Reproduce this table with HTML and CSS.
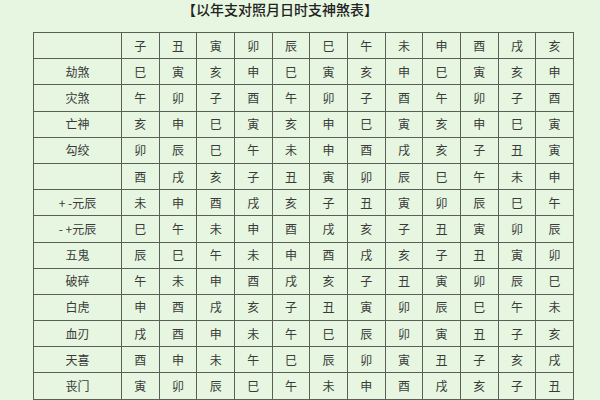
FILE: index.html
```html
<!DOCTYPE html>
<html lang="zh">
<head>
<meta charset="utf-8">
<link rel="stylesheet" href="styles.css">
</head>
<body>
<div class="page">
  <div class="title">【以年支对照月日时支神煞表】</div>
  <table class="grid">
    <colgroup><col class="c-name"><col span="12" class="c-val"></colgroup>
    <tbody>
      <tr><td></td><td>子</td><td>丑</td><td>寅</td><td>卯</td><td>辰</td><td>巳</td><td>午</td><td>未</td><td>申</td><td>酉</td><td>戌</td><td>亥</td></tr>
      <tr><td>劫煞</td><td>巳</td><td>寅</td><td>亥</td><td>申</td><td>巳</td><td>寅</td><td>亥</td><td>申</td><td>巳</td><td>寅</td><td>亥</td><td>申</td></tr>
      <tr><td>灾煞</td><td>午</td><td>卯</td><td>子</td><td>酉</td><td>午</td><td>卯</td><td>子</td><td>酉</td><td>午</td><td>卯</td><td>子</td><td>酉</td></tr>
      <tr><td>亡神</td><td>亥</td><td>申</td><td>巳</td><td>寅</td><td>亥</td><td>申</td><td>巳</td><td>寅</td><td>亥</td><td>申</td><td>巳</td><td>寅</td></tr>
      <tr><td>勾绞</td><td>卯</td><td>辰</td><td>巳</td><td>午</td><td>未</td><td>申</td><td>酉</td><td>戌</td><td>亥</td><td>子</td><td>丑</td><td>寅</td></tr>
      <tr><td></td><td>酉</td><td>戌</td><td>亥</td><td>子</td><td>丑</td><td>寅</td><td>卯</td><td>辰</td><td>巳</td><td>午</td><td>未</td><td>申</td></tr>
      <tr><td>+ -元辰</td><td>未</td><td>申</td><td>酉</td><td>戌</td><td>亥</td><td>子</td><td>丑</td><td>寅</td><td>卯</td><td>辰</td><td>巳</td><td>午</td></tr>
      <tr><td>- +元辰</td><td>巳</td><td>午</td><td>未</td><td>申</td><td>酉</td><td>戌</td><td>亥</td><td>子</td><td>丑</td><td>寅</td><td>卯</td><td>辰</td></tr>
      <tr><td>五鬼</td><td>辰</td><td>巳</td><td>午</td><td>未</td><td>申</td><td>酉</td><td>戌</td><td>亥</td><td>子</td><td>丑</td><td>寅</td><td>卯</td></tr>
      <tr><td>破碎</td><td>午</td><td>未</td><td>申</td><td>酉</td><td>戌</td><td>亥</td><td>子</td><td>丑</td><td>寅</td><td>卯</td><td>辰</td><td>巳</td></tr>
      <tr><td>白虎</td><td>申</td><td>酉</td><td>戌</td><td>亥</td><td>子</td><td>丑</td><td>寅</td><td>卯</td><td>辰</td><td>巳</td><td>午</td><td>未</td></tr>
      <tr><td>血刃</td><td>戌</td><td>酉</td><td>申</td><td>未</td><td>午</td><td>巳</td><td>辰</td><td>卯</td><td>寅</td><td>丑</td><td>子</td><td>亥</td></tr>
      <tr><td>天喜</td><td>酉</td><td>申</td><td>未</td><td>午</td><td>巳</td><td>辰</td><td>卯</td><td>寅</td><td>丑</td><td>子</td><td>亥</td><td>戌</td></tr>
      <tr><td>丧门</td><td>寅</td><td>卯</td><td>辰</td><td>巳</td><td>午</td><td>未</td><td>申</td><td>酉</td><td>戌</td><td>亥</td><td>子</td><td>丑</td></tr>
    </tbody>
  </table>
</div>
</body>
</html>
```

FILE: styles.css
```css
html, body {
  margin: 0;
  padding: 0;
  background: #e6f6e0;
}
.page {
  width: 600px;
  height: 400px;
  overflow: hidden;
  font-family: "Noto Sans CJK SC", "Noto Sans", sans-serif;
  color: #3a3a3a;
}
.title {
  height: 32px;
  padding-right: 40px;
  padding-top: 1px;
  box-sizing: border-box;
  line-height: 16px;
  text-align: center;
  font-size: 14px;
  font-weight: 500;
  color: #222;
}
.grid {
  margin-left: 33px;
  width: 541px;
  border-collapse: collapse;
  table-layout: fixed;
}
.c-name { width: 88px; }
.grid td {
  height: 25.2px;
  padding: 0;
  border: 1.5px solid #5a5f58;
  text-align: center;
  vertical-align: middle;
  font-size: 12px;
  line-height: 14px;
}
```
